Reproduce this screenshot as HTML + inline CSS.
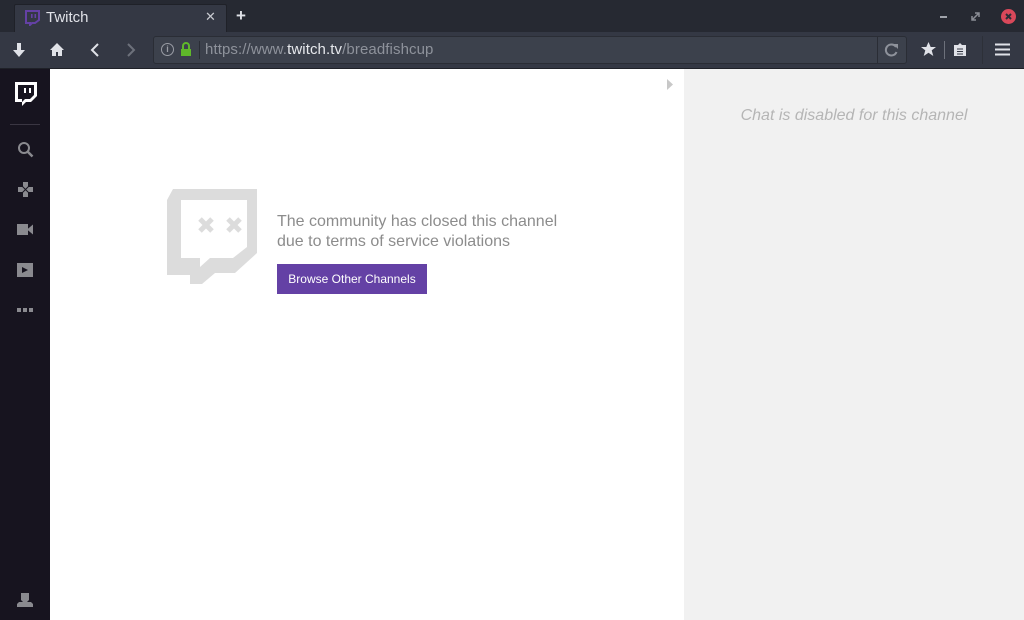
<!DOCTYPE html>
<html><head><meta charset="utf-8"><style>
*{margin:0;padding:0;box-sizing:border-box}
body{width:1024px;height:620px;overflow:hidden;font-family:"Liberation Sans",sans-serif;background:#fff;position:relative}
.abs{position:absolute}
</style></head><body>
<!-- title bar -->
<div class="abs" style="left:0;top:0;width:1024px;height:32px;background:#262932"></div>
<div class="abs" style="left:14px;top:4px;width:213px;height:28px;background:#343844;border:1px solid #1f2128;border-bottom:none;border-radius:2px 2px 0 0"></div>
<svg class="abs" style="left:25px;top:10px" width="15" height="16" viewBox="0 0 15 16"><path d="M1 1h13v9l-4 3h-3l-2 2v-2H1z" fill="none" stroke="#6441a5" stroke-width="2"/><rect x="6" y="4" width="1.6" height="4" fill="#6441a5"/><rect x="9.5" y="4" width="1.6" height="4" fill="#6441a5"/></svg>
<div class="abs" style="left:46px;top:9px;color:#e0e2e8;font-size:15px">Twitch</div>
<div class="abs" style="left:205px;top:9px;color:#c8cad0;font-size:13px">✕</div>
<div class="abs" style="left:236px;top:6px;color:#e0e2e8;font-size:17px;font-weight:bold">+</div>
<div class="abs" style="left:940px;top:16px;width:7px;height:2px;background:#a0a3ab"></div>
<svg class="abs" style="left:971px;top:12px" width="9" height="9"><path d="M1 8L8 1M4 1h4v4M1 4v4h4" fill="none" stroke="#8a8d95" stroke-width="1.5"/></svg>
<div class="abs" style="left:1001px;top:9px;width:15px;height:15px;border-radius:50%;background:#d9485a"></div>
<svg class="abs" style="left:1001px;top:9px" width="15" height="15"><path d="M5 5l5 5M10 5l-5 5" stroke="#2b2e38" stroke-width="2"/></svg>
<!-- toolbar -->
<div class="abs" style="left:0;top:32px;width:1024px;height:37px;background:#343844;border-bottom:1px solid #1f2128"></div>
<svg class="abs" style="left:12px;top:42px" width="14" height="16"><path d="M5 1h4v7h4l-6 7-6-7h4z" fill="#e0e2e8"/></svg>
<svg class="abs" style="left:49px;top:42px" width="16" height="15"><path d="M8 1l7 7h-2v6h-4v-4H7v4H3V8H1z" fill="#e0e2e8"/></svg>
<svg class="abs" style="left:90px;top:42px" width="10" height="16"><path d="M8 2L2 8l6 6" fill="none" stroke="#e0e2e8" stroke-width="2"/></svg>
<svg class="abs" style="left:126px;top:42px" width="10" height="16"><path d="M2 2l6 6-6 6" fill="none" stroke="#6d717b" stroke-width="2"/></svg>
<div class="abs" style="left:153px;top:36px;width:754px;height:28px;background:#3c414c;border:1px solid #2a2d35;border-radius:3px"></div>
<div class="abs" style="left:161px;top:43px;width:13px;height:13px;border:1.5px solid #9a9da5;border-radius:50%;color:#9a9da5;font-size:9px;line-height:10px;text-align:center;font-weight:bold">i</div>
<svg class="abs" style="left:180px;top:42px" width="12" height="15"><path d="M3 7V4a3 3 0 0 1 6 0v3" fill="none" stroke="#5fb82a" stroke-width="2"/><rect x="1" y="7" width="10" height="7" fill="#5fb82a"/></svg>
<div class="abs" style="left:199px;top:41px;width:1px;height:18px;background:#2a2d35"></div>
<div class="abs" style="left:205px;top:41px;font-size:15px;color:#8e929b;letter-spacing:0.1px">https://www.<span style="color:#e6e8ec">twitch.tv</span>/breadfishcup</div>
<div class="abs" style="left:877px;top:37px;width:1px;height:26px;background:#2a2d35"></div>
<svg class="abs" style="left:884px;top:42px" width="15" height="15"><path d="M12 5A5.5 5.5 0 1 0 12.5 10" fill="none" stroke="#8e929b" stroke-width="2"/><path d="M9 2h5v5z" fill="#8e929b"/></svg>
<svg class="abs" style="left:920px;top:41px" width="17" height="17" viewBox="0 0 17 17"><path d="M8.5 1l2.2 5h5.3l-4.3 3.4 1.6 5.6-4.8-3.2-4.8 3.2 1.6-5.6L1 6h5.3z" fill="#e0e2e8"/></svg>
<div class="abs" style="left:944px;top:41px;width:1px;height:18px;background:#6d717b"></div>
<svg class="abs" style="left:953px;top:42px" width="14" height="15"><path d="M1 3h4l2-2 2 2h4v11H1z" fill="#e0e2e8"/><path d="M4 7h6M4 9.5h6M4 12h6" stroke="#343844" stroke-width="1"/></svg>
<div class="abs" style="left:982px;top:36px;width:1px;height:28px;background:#2d3038"></div>
<svg class="abs" style="left:995px;top:43px" width="15" height="13"><path d="M0 1.5h15M0 6.5h15M0 11.5h15" stroke="#e0e2e8" stroke-width="2"/></svg>
<!-- sidebar -->
<div class="abs" style="left:0;top:69px;width:50px;height:551px;background:#17141f"></div>
<svg class="abs" style="left:14px;top:81px" width="24" height="25" viewBox="0 0 24 25"><path d="M1 1h22v14l-6 6h-5l-4 4v-4H1z" fill="#fff"/><path d="M4 4h16v10l-4 4h-5l-3 3v-3H4z" fill="#17141f"/><rect x="10" y="7" width="2" height="5" fill="#fff"/><rect x="15" y="7" width="2" height="5" fill="#fff"/></svg>
<div class="abs" style="left:10px;top:124px;width:30px;height:1px;background:#3a3642"></div>
<svg class="abs" style="left:17px;top:141px" width="17" height="17"><circle cx="7" cy="7" r="5" fill="none" stroke="#8a8a8f" stroke-width="2"/><path d="M10.5 10.5l5 5" stroke="#8a8a8f" stroke-width="2.5"/></svg>
<svg class="abs" style="left:17px;top:181px" width="17" height="17"><path d="M6 1h5v5h5v5h-5v5H6v-5H1V6h5z" fill="#8a8a8f"/><path d="M5 5l7 7M12 5l-7 7" stroke="#17141f" stroke-width="1"/></svg>
<svg class="abs" style="left:17px;top:223px" width="17" height="13"><rect x="0" y="1" width="11" height="11" fill="#8a8a8f"/><path d="M10 6.5l6-5v10z" fill="#8a8a8f"/></svg>
<svg class="abs" style="left:17px;top:263px" width="17" height="15"><rect x="0" y="0" width="16" height="14" fill="#8a8a8f"/><path d="M5 4l6 3-6 3z" fill="#17141f"/></svg>
<div class="abs" style="left:17px;top:308px;width:4px;height:4px;background:#8a8a8f;box-shadow:6px 0 #8a8a8f,12px 0 #8a8a8f"></div>
<svg class="abs" style="left:17px;top:592px" width="16" height="16"><path d="M4 1h8v7l-2 2h4l2 2v3H0v-3l2-2h4L4 8z" fill="#8a8a8f"/></svg>
<!-- chat -->
<div class="abs" style="left:684px;top:69px;width:340px;height:551px;background:#f1f1f1"></div>
<div class="abs" style="left:684px;top:107px;width:340px;text-align:center;color:#b5b5b5;font-size:16px;font-style:italic">Chat is disabled for this channel</div>
<svg class="abs" style="left:666px;top:79px" width="8" height="11"><path d="M1 0l6 5.5-6 5.5z" fill="#c8c8c8"/></svg>
<!-- glitch -->
<svg class="abs" style="left:160px;top:185px" width="105" height="105" viewBox="0 0 105 105"><path fill-rule="evenodd" fill="#dcdcdc" d="M7 15L13 4H97V68L75 88H55L42 99H30V90H7Z M21 15H87V62L73 73H50L40 82V73H21Z"/><path d="M40 34l12 12M52 34l-12 12M68 34l12 12M80 34l-12 12" stroke="#dcdcdc" stroke-width="5"/></svg>
<div class="abs" style="left:277px;top:212px;color:#8c8c8c;font-size:16px;line-height:20px">The community has closed this channel<br>due to terms of service violations</div>
<div class="abs" style="left:277px;top:264px;width:150px;height:30px;background:#6441a5;color:#fff;font-size:12px;line-height:30px;text-align:center">Browse Other Channels</div>
</body></html>
